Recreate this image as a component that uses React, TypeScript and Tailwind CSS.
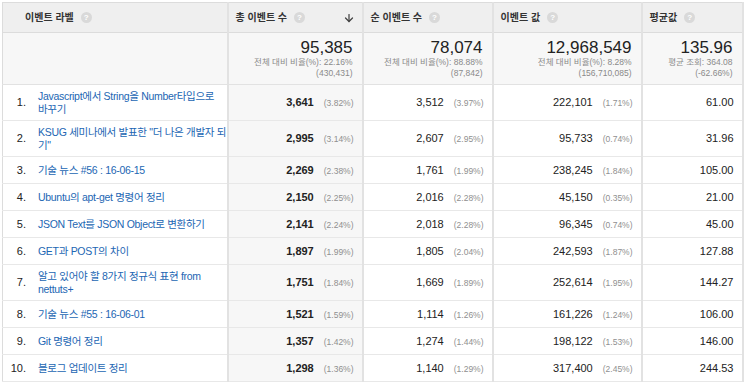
import { ArrowDown } from 'lucide-react';

type Row = {
  label: string[];
  total: string;
  totalPct: string;
  unique: string;
  uniquePct: string;
  value: string;
  valuePct: string;
  avg: string;
};

const ROWS: Row[] = [
  { label: ['Javascript에서 String을 Number타입으로', '바꾸기'], total: '3,641', totalPct: '(3.82%)', unique: '3,512', uniquePct: '(3.97%)', value: '222,101', valuePct: '(1.71%)', avg: '61.00' },
  { label: ['KSUG 세미나에서 발표한 "더 나은 개발자 되', '기"'], total: '2,995', totalPct: '(3.14%)', unique: '2,607', uniquePct: '(2.95%)', value: '95,733', valuePct: '(0.74%)', avg: '31.96' },
  { label: ['기술 뉴스 #56 : 16-06-15'], total: '2,269', totalPct: '(2.38%)', unique: '1,761', uniquePct: '(1.99%)', value: '238,245', valuePct: '(1.84%)', avg: '105.00' },
  { label: ['Ubuntu의 apt-get 명령어 정리'], total: '2,150', totalPct: '(2.25%)', unique: '2,016', uniquePct: '(2.28%)', value: '45,150', valuePct: '(0.35%)', avg: '21.00' },
  { label: ['JSON Text를 JSON Object로 변환하기'], total: '2,141', totalPct: '(2.24%)', unique: '2,018', uniquePct: '(2.28%)', value: '96,345', valuePct: '(0.74%)', avg: '45.00' },
  { label: ['GET과 POST의 차이'], total: '1,897', totalPct: '(1.99%)', unique: '1,805', uniquePct: '(2.04%)', value: '242,593', valuePct: '(1.87%)', avg: '127.88' },
  { label: ['알고 있어야 할 8가지 정규식 표현 from', 'nettuts+'], total: '1,751', totalPct: '(1.84%)', unique: '1,669', uniquePct: '(1.89%)', value: '252,614', valuePct: '(1.95%)', avg: '144.27' },
  { label: ['기술 뉴스 #55 : 16-06-01'], total: '1,521', totalPct: '(1.59%)', unique: '1,114', uniquePct: '(1.26%)', value: '161,226', valuePct: '(1.24%)', avg: '106.00' },
  { label: ['Git 명령어 정리'], total: '1,357', totalPct: '(1.42%)', unique: '1,274', uniquePct: '(1.44%)', value: '198,122', valuePct: '(1.53%)', avg: '146.00' },
  { label: ['블로그 업데이트 정리'], total: '1,298', totalPct: '(1.36%)', unique: '1,140', uniquePct: '(1.29%)', value: '317,400', valuePct: '(2.45%)', avg: '244.53' },
];

function Help() {
  return (
    <span className="ml-[7px] inline-flex h-[11px] w-[11px] items-center justify-center rounded-full bg-[#d9d9d9] text-[8px] font-bold leading-none text-white">
      ?
    </span>
  );
}

function HeadCell({ title, sorted, className }: { title: string; sorted?: boolean; className?: string }) {
  return (
    <th className={`border-r-2 border-[#e2e2e2] px-[7px] text-left align-middle font-bold ${className ?? ''}`}>
      <div className="flex items-center">
        <span>{title}</span>
        <Help />
        {sorted && <ArrowDown className="ml-auto text-[#444]" size={12} strokeWidth={2.5} />}
      </div>
    </th>
  );
}

function Summary({ big, line1, line2 }: { big: string; line1: string; line2: string }) {
  return (
    <td className="border-r-2 border-[#e2e2e2] pr-[9px] text-right align-middle">
      <div className="text-[17px] leading-[19px] text-[#222]">{big}</div>
      <div className="text-[8.5px] leading-[11px] text-[#8a8a8a]">{line1}</div>
      <div className="text-[8.5px] leading-[11px] text-[#8a8a8a]">{line2}</div>
    </td>
  );
}

function NumCell({ n, pct, bold, sorted }: { n: string; pct?: string; bold?: boolean; sorted?: boolean }) {
  return (
    <td className={`whitespace-nowrap border-r-2 border-[#e2e2e2] pr-[8px] text-right align-middle ${sorted ? 'bg-[#f7f7f7]' : ''}`}>
      <span className={`text-[11px] text-[#222] ${bold ? 'font-bold' : ''}`}>{n}</span>
      {pct && <span className="ml-[10px] text-[8.5px] text-[#8f8f8f]">{pct}</span>}
    </td>
  );
}

export default function App() {
  return (
    <div className="min-h-screen bg-white pl-[2px] pt-[2px]" style={{ fontFamily: '"Liberation Sans", "Noto Sans CJK KR", Arial, sans-serif' }}>
      <table className="w-[740px] table-fixed border-collapse border-l border-t border-[#dcdcdc] text-[11px] text-[#222]">
        <colgroup>
          <col className="w-[225px]" />
          <col className="w-[135px]" />
          <col className="w-[130px]" />
          <col className="w-[149px]" />
          <col className="w-[101px]" />
        </colgroup>
        <thead>
          <tr className="h-[30px] border-b border-[#dcdcdc] bg-[#efefef] text-[10px] text-[#333]">
            <HeadCell title="이벤트 라벨" className="pl-[22px]" />
            <HeadCell title="총 이벤트 수" sorted />
            <HeadCell title="순 이벤트 수" />
            <HeadCell title="이벤트 값" />
            <HeadCell title="평균값" />
          </tr>
        </thead>
        <tbody>
          <tr className="h-[52px] border-b border-[#e2e2e2] bg-[#f7f7f7]">
            <td className="border-r-2 border-[#e2e2e2]" />
            <Summary big="95,385" line1="전체 대비 비율(%): 22.16%" line2="(430,431)" />
            <Summary big="78,074" line1="전체 대비 비율(%): 88.88%" line2="(87,842)" />
            <Summary big="12,968,549" line1="전체 대비 비율(%): 8.28%" line2="(156,710,085)" />
            <Summary big="135.96" line1="평균 조회: 364.08" line2="(-62.66%)" />
          </tr>
          {ROWS.map((r, i) => (
            <tr key={r.label[0]} className={`border-b border-[#e8e8e8] ${r.label.length > 1 ? 'h-[36px]' : 'h-[27px]'}`}>
              <td className="overflow-hidden border-r-2 border-[#e2e2e2] align-middle">
                <div className="flex items-center">
                  <span className="w-[23px] shrink-0 text-right text-[11px] text-[#222]">{i + 1}.</span>
                  <a href="#" className="ml-[12px] whitespace-nowrap text-[10.5px] leading-[13px] tracking-[-0.3px] text-[#2266b3]">
                    {r.label.map((line) => (
                      <span key={line} className="block">
                        {line}
                      </span>
                    ))}
                  </a>
                </div>
              </td>
              <NumCell n={r.total} pct={r.totalPct} bold sorted />
              <NumCell n={r.unique} pct={r.uniquePct} />
              <NumCell n={r.value} pct={r.valuePct} />
              <NumCell n={r.avg} />
            </tr>
          ))}
        </tbody>
      </table>
    </div>
  );
}
